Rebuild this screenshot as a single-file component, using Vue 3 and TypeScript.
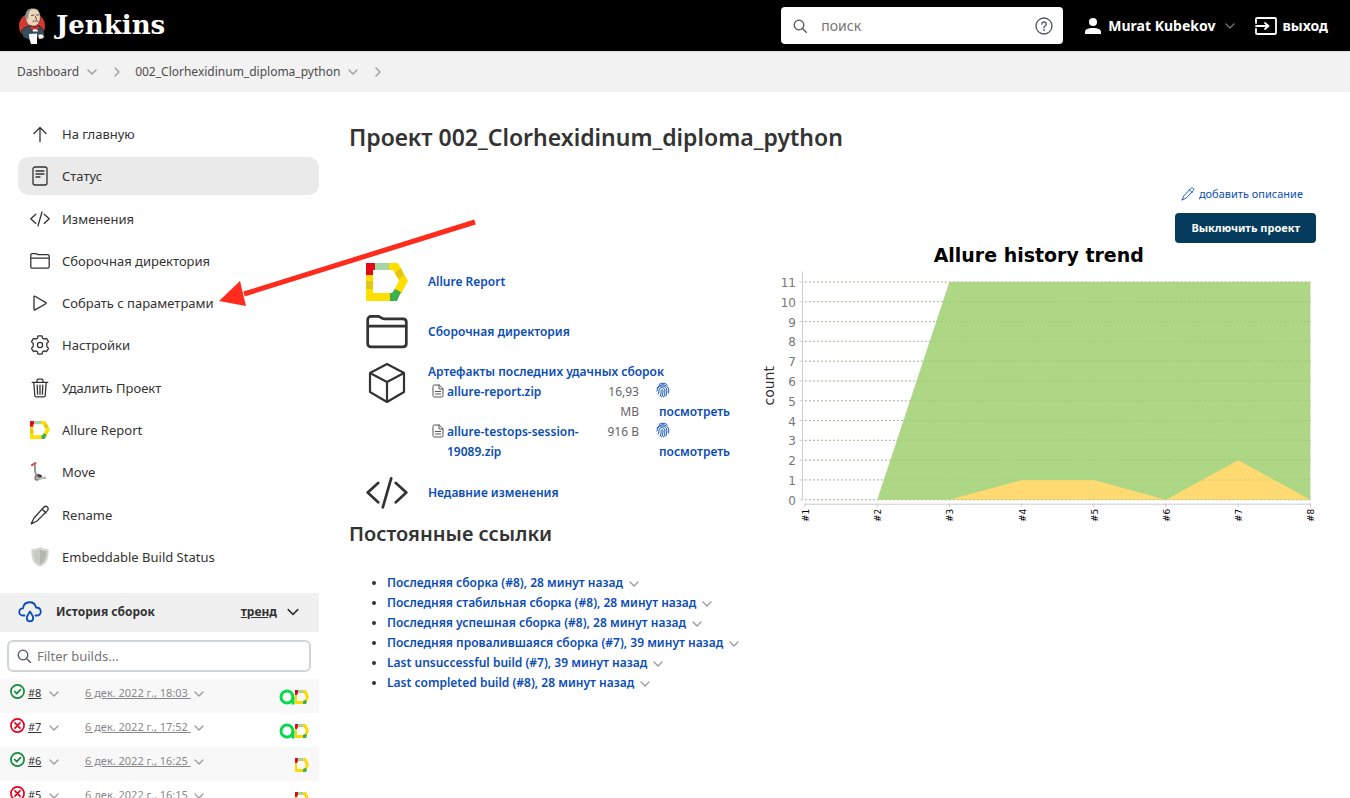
<script setup lang="ts">
interface Task { icon: string; label: string; active?: boolean }
interface Build { id: number; ok: boolean; date: string; testops: boolean }
interface Artifact { name: string; size: string }

const tasks: Task[] = [
  { icon: 'up', label: 'На главную' },
  { icon: 'doc', label: 'Статус', active: true },
  { icon: 'code', label: 'Изменения' },
  { icon: 'folder', label: 'Сборочная директория' },
  { icon: 'play', label: 'Собрать с параметрами' },
  { icon: 'gear', label: 'Настройки' },
  { icon: 'trash', label: 'Удалить Проект' },
  { icon: 'allure', label: 'Allure Report' },
  { icon: 'move', label: 'Move' },
  { icon: 'pencil', label: 'Rename' },
  { icon: 'shield', label: 'Embeddable Build Status' },
]

const builds: Build[] = [
  { id: 8, ok: true, date: '6 дек. 2022 г., 18:03', testops: true },
  { id: 7, ok: false, date: '6 дек. 2022 г., 17:52', testops: true },
  { id: 6, ok: true, date: '6 дек. 2022 г., 16:25', testops: false },
  { id: 5, ok: false, date: '6 дек. 2022 г., 16:15', testops: false },
]

const artifacts: Artifact[] = [
  { name: 'allure-report.zip', size: '16,93 MB' },
  { name: 'allure-testops-session-19089.zip', size: '916 B' },
]

const permalinks: string[] = [
  'Последняя сборка (#8), 28 минут назад',
  'Последняя стабильная сборка (#8), 28 минут назад',
  'Последняя успешная сборка (#8), 28 минут назад',
  'Последняя провалившаяся сборка (#7), 39 минут назад',
  'Last unsuccessful build (#7), 39 минут назад',
  'Last completed build (#8), 28 минут назад',
]

const passed = [0, 0, 11, 11, 11, 11, 11, 11]
const broken = [0, 0, 0, 1, 1, 0, 2, 0]
const plot = { left: 48, right: 554, top: 42, bottom: 260, max: 11 }
const xAt = (i: number): number => plot.left + ((plot.right - plot.left) * i) / (passed.length - 1)
const yAt = (v: number): number => plot.bottom - ((plot.bottom - plot.top) * v) / plot.max
const area = (values: number[]): string =>
  [`${xAt(0)},${yAt(0)}`, ...values.map((v, i) => `${xAt(i)},${yAt(v)}`), `${xAt(values.length - 1)},${yAt(0)}`].join(' ')
const ticks = Array.from({ length: plot.max + 1 }, (_, i) => i)
</script>

<template>
  <div class="page">
    <svg class="sprite" aria-hidden="true">
      <symbol id="i-up" viewBox="0 0 20 20"><path d="M10 17.5V3.5M4 9.5l6-6 6 6" /></symbol>
      <symbol id="i-doc" viewBox="0 0 20 20"><rect x="3" y="1" width="14" height="18" rx="2" /><path d="M6 5h8M6 8h8M6 11h4" /></symbol>
      <symbol id="i-code" viewBox="0 0 20 20"><path d="M5.8 5.2.8 9.8l5 4.6M14.2 5.2l5 4.6-5 4.6M12 3 8 16.8" /></symbol>
      <symbol id="i-folder" viewBox="0 0 20 20"><path d="M.8 15.5V4.2c0-1 .6-1.6 1.6-1.6h3.2c1.4 0 1.6 1.1 3 1.1h9c1 0 1.6.6 1.6 1.6v10.2c0 1-.6 1.6-1.6 1.6H2.400c-1 0-1.600-.6-1.600-1.600ZM.8 7.200h18.400" /></symbol>
      <symbol id="i-play" viewBox="0 0 20 20"><path d="M4 3.800v12.600c0 .6.5.8 1 .5l10.800-6.200c.5-.3.5-.8 0-1.100L5 3.300c-.5-.3-1-.1-1 .5Z" /></symbol>
      <symbol id="i-gear" viewBox="0 0 20 20"><path d="M8 .8h4l.5 2.300 1.800 1 2.200-.8 2 3.400-1.700 1.700v3.200l1.700 1.700-2 3.400-2.200-.8-1.800 1-.5 2.300H8l-.5-2.300-1.800-1-2.200.8-2-3.400 1.700-1.700V8.400L1.500 6.700l2-3.400 2.200.8 1.800-1Z" /><circle cx="10" cy="10" r="2.600" /></symbol>
      <symbol id="i-trash" viewBox="0 0 20 20"><path d="M3.800 4.500 4.800 17.500c.1.9.6 1.400 1.400 1.400h7.600c.8 0 1.300-.5 1.400-1.400l1-13M2.200 4.300h15.600M7 4V2.500c0-.9.500-1.400 1.400-1.400h3.200c.9 0 1.400.5 1.400 1.400V4M7.200 7.200l.4 9M10 7.200v9M12.800 7.200l-.4 9" /></symbol>
      <symbol id="i-pencil" viewBox="0 0 20 20"><path d="M13.800 2.200c1-1 2.400-1.200 3.500-.3 1.200 1 1.100 2.600.1 3.700L7 16l-5.800 2.800L4 13ZM12 4l4 4" /></symbol>
      <symbol id="i-allure" viewBox="0 0 42 38">
        <g stroke="none">
          <path fill="#ffdf00" d="M0 12h7v18h17v8H0ZM23 0h9l10 18-7 13-7-4 5-9-6-11h-4Z" />
          <path fill="#e3c517" d="M0 18h7v8H0ZM35 5l-6 5 4 6 5-4Z" />
          <path fill="#e60a17" d="M0 0h9v7H7v5H0Z" />
          <path fill="#a5d4a5" d="M9 0h14v7H9Z" />
          <path fill="#3daf4b" d="M24 30h2l3-4 6 3-4 9h-7Z" />
        </g>
      </symbol>
      <symbol id="i-allure-mini" viewBox="0 0 14 14">
        <g stroke="none">
          <path fill="#ffd800" d="M0 4h2v7h7v3H0ZM8 0h3l3 7-3 6-2-2 2-4-2-4H8Z" />
          <path fill="#e60a17" d="M0 0h3v3l-1 2H0Z" /><path fill="#a5d4a5" d="M3 0h5v3H3Z" />
          <path fill="#3daf4b" d="m8 11 2-1 2 1-1 3H8Z" />
        </g>
      </symbol>
      <symbol id="i-move" viewBox="0 0 20 20">
        <path stroke="#999" stroke-width="2" d="M5 3v6l2 7h8" /><path stroke="#333" stroke-width="2" d="m8 13 3 1-2 1" />
        <path stroke="#d94a50" stroke-width="2" d="M2 3.200 5.500 1" /><circle cx="7" cy="16" r="2" fill="#bbb" stroke="#777" /><path stroke="#bbb" stroke-width="2" d="m9 17 6-1.500" />
      </symbol>
      <symbol id="i-shield" viewBox="0 0 20 20">
        <path fill="#d4d5d0" stroke="#d4d5d0" d="M2 3c3 0 5.500-.8 8-2.200C12.500 2.200 15 3 18 3c0 8-1 13-8 16C3 16 2 11 2 3Z" />
        <path fill="#b3b6af" stroke="none" d="M10 2.500c2 1 4 1.500 6.500 1.600C16.400 11 15 15 10 17.500Z" />
        <path fill="#c6c8c2" stroke="none" d="M10 2.500c-2 1-4 1.500-6.500 1.600C3.600 11 5 15 10 17.500Z" />
      </symbol>
      <symbol id="i-box" viewBox="0 0 38 42"><path d="M19 2 36 11v19L19 40 2 30V11ZM2 11l17 9 17-9M19 20v20" /></symbol>
      <symbol id="i-file" viewBox="0 0 12 14"><path d="M1 2.200C1 1.300 1.500 1 2.200 1h5L11 4.700v7.200c0 .7-.4 1.100-1.200 1.100H2.200C1.500 13 1 12.600 1 11.900ZM7 1v4h4M3.300 7.500h5.400M3.300 10h5.400" /></symbol>
      <symbol id="i-finger" viewBox="0 0 14 16"><path d="M3 2.500C5 .8 9 .5 11.300 3M1 6C3.500 1.500 10.500 1.800 12.500 6.500c.5 1.500.4 3 .1 4.500M1 9c.5-7 9.500-6.500 9.800-.5 0 2-.2 4-.8 5.500M2.200 12C3 10.500 2.800 9.500 3 8.500c.7-4.500 6-3.500 5.900.5 0 2.500-.4 4.300-1.200 6M4.300 14C5.200 12 4.900 10 5.200 8.500c.5-1.500 1.900-1 1.800.5 0 2.200-.4 4-1.300 5.800" /></symbol>
      <symbol id="i-chev" viewBox="0 0 10 10"><path d="m1 3 4 4 4-4" /></symbol>
      <symbol id="i-right" viewBox="0 0 10 10"><path d="m3 1 4 4-4 4" /></symbol>
      <symbol id="i-search" viewBox="0 0 14 14"><circle cx="6" cy="6" r="4.800" /><path d="m9.500 9.500 4 4" /></symbol>
      <symbol id="i-help" viewBox="0 0 18 18"><circle cx="9" cy="9" r="8" /><path d="M6.800 7.200c0-3 4.600-2.800 4.500-.1 0 1.700-2.300 1.800-2.300 3.700M9 12.300v1.200" /></symbol>
      <symbol id="i-user" viewBox="0 0 16 16"><g fill="currentColor" stroke="none"><circle cx="8" cy="4" r="4" /><path d="M0 16v-2c0-3 3.500-4 8-4s8 1 8 4v2Z" /></g></symbol>
      <symbol id="i-exit" viewBox="0 0 22 18"><path d="M1 6V2c0-.6.400-1 1-1h18c.6 0 1 .4 1 1v14c0 .6-.4 1-1 1H2c-.6 0-1-.4-1-1v-4M1 9h12M10 6l3.500 3-3.500 3" /></symbol>
      <symbol id="i-cloud" viewBox="0 0 24 22"><path d="M6.500 14.500H5c-5 0-5-7 0-7.200C6-.5 16.500-.8 18 6.500c6 .2 6.500 8 .5 8h-1M12 10.500c-2 3-3.200 4.500-3.200 6.600 0 4.400 6.400 4.400 6.400 0 0-2.100-1.200-3.600-3.200-6.600Z" /></symbol>
      <symbol id="i-ok" viewBox="0 0 16 16"><circle cx="8" cy="8" r="7" /><path d="m5 8 2.200 2.300L11.200 6" /></symbol>
      <symbol id="i-fail" viewBox="0 0 16 16"><circle cx="8" cy="8" r="7" /><path d="m5.300 5.300 5.400 5.400M10.700 5.300l-5.400 5.400" /></symbol>
      <symbol id="i-testops" viewBox="0 0 16 16"><circle cx="8" cy="8" r="6" /><path stroke-linecap="butt" d="M14 8v7.500" /></symbol>
      <symbol id="i-butler" viewBox="0 0 28 38">
        <g stroke="none">
          <circle cx="14" cy="19" r="13" fill="#d33833" />
          <path fill="#335061" stroke="#111" stroke-width=".6" d="M4 23c2-2.500 5-3.500 8-4.500l5 2 4-2c3 2 5 5 5.500 9l-3 4-5-1-5 3-8-3Z" />
          <path fill="#f0d6b7" stroke="#333" stroke-width=".5" d="M8 7C9 1 18 0 20.500 4c2.500 3.500 2.200 9 0 12.500-2 3-7 3.500-10 1C8 15.500 7 11 8 7Z" />
          <path fill="#8d8f92" d="M7.500 8C8 3.500 11 1.500 14 1.500 11.500 3.500 10.500 6 10.500 9L9.500 13C7.500 12 7 10 7.500 8Z" />
          <path stroke="#333" stroke-width=".8" fill="none" d="M13.500 8.500 16 8M18.500 8h2M17.500 9.500l1 3M15 14.500c2-1 3.500-1 5 0" />
          <path fill="#fff" d="m13 19.500 4 2 3-2v5h-5Z" />
          <path fill="#d33833" stroke="#7a1715" stroke-width=".5" d="m13 18.500 4 2 4-2-.5 5-3.500-2-4 2Z" />
          <path fill="#fff" d="m11 27 8-.5v10.500h-6c-1-3-2-6-2-10Z" />
          <path fill="#f7f2e9" stroke="#333" stroke-width=".6" d="M20 28c2-2 5-1 6 1 .5 2-2 3.500-5 3Z" />
        </g>
      </symbol>
    </svg>

    <header class="topbar">
      <a class="brand" href="#"><svg class="butler"><use href="#i-butler" /></svg><span>Jenkins</span></a>
      <form class="search" role="search">
        <svg class="ic14"><use href="#i-search" /></svg>
        <input type="search" placeholder="поиск" aria-label="поиск" />
        <a href="#" aria-label="Помощь"><svg class="ic18"><use href="#i-help" /></svg></a>
      </form>
      <a class="user" href="#"><svg class="ic16"><use href="#i-user" /></svg><span>Murat Kubekov</span></a>
      <button class="chev" type="button" aria-label="Меню пользователя"><svg><use href="#i-chev" /></svg></button>
      <a class="exit" href="#"><svg><use href="#i-exit" /></svg><span>выход</span></a>
    </header>

    <nav class="crumbs">
      <a href="#">Dashboard</a>
      <button class="chev" type="button" aria-label="Меню Dashboard"><svg><use href="#i-chev" /></svg></button>
      <svg class="sep"><use href="#i-right" /></svg>
      <a href="#">002_Clorhexidinum_diploma_python</a>
      <button class="chev" type="button" aria-label="Меню проекта"><svg><use href="#i-chev" /></svg></button>
      <svg class="sep"><use href="#i-right" /></svg>
    </nav>

    <div class="body">
      <aside class="side">
        <nav class="tasks">
          <a v-for="t in tasks" :key="t.label" href="#" class="task" :class="{ active: t.active }">
            <svg><use :href="'#i-' + t.icon" /></svg><span>{{ t.label }}</span>
          </a>
        </nav>
        <section class="history">
          <div class="history-head">
            <svg class="cloud"><use href="#i-cloud" /></svg>
            <span class="history-title">История сборок</span>
            <a href="#">тренд</a>
            <button class="chev dark" type="button" aria-label="Свернуть"><svg><use href="#i-chev" /></svg></button>
          </div>
          <label class="filter">
            <svg class="ic14"><use href="#i-search" /></svg>
            <input type="text" placeholder="Filter builds..." aria-label="Filter builds..." />
          </label>
          <ul class="builds">
            <li v-for="b in builds" :key="b.id">
              <svg class="state" :class="b.ok ? 'ok' : 'fail'"><use :href="b.ok ? '#i-ok' : '#i-fail'" /></svg>
              <a href="#" class="num">#{{ b.id }}</a>
              <button class="chev" type="button" :aria-label="'Меню сборки ' + b.id"><svg><use href="#i-chev" /></svg></button>
              <a href="#" class="date">{{ b.date }}&nbsp;</a>
              <button class="chev more" type="button" :aria-label="'Ещё о сборке ' + b.id"><svg><use href="#i-chev" /></svg></button>
              <span class="badges">
                <svg v-if="b.testops" class="testops"><use href="#i-testops" /></svg>
                <svg class="mini"><use href="#i-allure-mini" /></svg>
              </span>
            </li>
          </ul>
        </section>
      </aside>

      <main class="main">
        <h1>Проект 002_Clorhexidinum_diploma_python</h1>
        <div class="actions">
          <a href="#" class="describe"><svg><use href="#i-pencil" /></svg>добавить описание</a>
          <button class="disable" type="button">Выключить проект</button>
        </div>
        <div class="columns">
          <div class="summary">
            <div class="row allure"><svg><use href="#i-allure" /></svg><a href="#">Allure Report</a></div>
            <div class="row folder"><svg><use href="#i-folder" /></svg><a href="#">Сборочная директория</a></div>
            <div class="row artifacts">
              <svg><use href="#i-box" /></svg>
              <div>
                <a href="#">Артефакты последних удачных сборок</a>
                <table>
                  <tbody>
                    <tr v-for="a in artifacts" :key="a.name">
                      <td class="file"><svg><use href="#i-file" /></svg></td>
                      <td class="name"><a href="#">{{ a.name }}</a></td>
                      <td class="size">{{ a.size }}</td>
                      <td class="view">
                        <a href="#" aria-label="Отпечаток"><svg><use href="#i-finger" /></svg></a>
                        <a href="#" class="look">посмотреть</a>
                      </td>
                    </tr>
                  </tbody>
                </table>
              </div>
            </div>
            <div class="row code"><svg><use href="#i-code" /></svg><a href="#">Недавние изменения</a></div>
            <h2>Постоянные ссылки</h2>
            <ul class="permalinks">
              <li v-for="p in permalinks" :key="p">
                <a href="#">{{ p }}</a>
                <button class="chev" type="button" :aria-label="'Меню: ' + p"><svg><use href="#i-chev" /></svg></button>
              </li>
            </ul>
          </div>

          <svg class="chart" viewBox="0 3 560 290" role="img" aria-label="Allure history trend">
            <text class="c-title" x="282" y="22">Allure history trend</text>
            <text class="c-axis" transform="translate(17 146) rotate(-90)">count</text>
            <line v-for="t in ticks" :key="'g' + t" class="grid" :x1="plot.left" :x2="plot.right" :y1="yAt(t)" :y2="yAt(t)" />
            <polygon class="passed" :points="area(passed)" />
            <polygon class="broken" :points="area(broken)" />
            <line v-for="t in ticks" :key="'o' + t" class="grid over" :x1="plot.left" :x2="plot.right" :y1="yAt(t)" :y2="yAt(t)" />
            <path class="axis" d="M45.500 32v228M48 264.500h506" />
            <g v-for="t in ticks" :key="'y' + t">
              <line class="axis" x1="43" x2="46" :y1="yAt(t)" :y2="yAt(t)" />
              <text class="c-y" x="39" :y="yAt(t) + 5">{{ t }}</text>
            </g>
            <g v-for="(_, i) in passed" :key="'x' + i">
              <line class="axis" :x1="xAt(i)" :x2="xAt(i)" y1="264" y2="267" />
              <text class="c-x" :transform="`translate(${xAt(i) + 4} 269) rotate(-90)`">#{{ i + 1 }}</text>
            </g>
          </svg>
        </div>
      </main>
    </div>

    <svg class="pointer" viewBox="0 0 260 90" aria-hidden="true">
      <path d="M257 5 26 77" /><path class="head" d="m1 84 21-20 6 25Z" />
    </svg>
  </div>
</template>

<style>
html, body { height: 100%; overflow: hidden; }
</style>

<style scoped>
* { box-sizing: border-box; }
.page {
  position: relative;
  height: 100vh;
  overflow: hidden;
  background: #fff;
  color: #333;
  font: 13px/20px "Noto Sans", "Open Sans", sans-serif;
}
svg { flex: none; fill: none; stroke: currentColor; stroke-width: 1.3; stroke-linecap: round; stroke-linejoin: round; }
.sprite { position: absolute; width: 0; height: 0; }
a { color: #0b4db7; text-decoration: none; }
button { border: 0; padding: 0; background: none; font: inherit; cursor: pointer; }
input { border: 0; outline: 0; background: none; font: inherit; color: #333; min-width: 0; }
input::placeholder { color: #757575; opacity: 1; }
ul { list-style: none; margin: 0; padding: 0; }
.chev { display: inline-flex; align-items: center; color: #9a9a9a; }
.chev svg { width: 10px; height: 10px; }
.chev.dark { color: #333; }
.ic14 { width: 14px; height: 14px; }
.ic16 { width: 16px; height: 16px; }
.ic18 { width: 18px; height: 18px; }

.topbar { display: flex; align-items: center; height: 51px; padding: 0 22px 0 18px; background: #000; }
.topbar a { display: flex; align-items: center; color: #fff; font-weight: 700; font-size: 14px; }
.topbar .brand { gap: 10px; margin-right: auto; font: 700 26px/32px "DejaVu Serif", serif; }
.brand span { padding-bottom: 2px; }
.butler { width: 28px; height: 38px; }
.search { display: flex; align-items: center; width: 282px; height: 37px; padding: 0 10px 0 12px; border-radius: 4px; background: #fff; color: #4d545d; }
.search input { flex: 1; padding: 0 0 0 14px; font-size: 14px; }
.topbar .search a { color: #4d545d; }
.topbar .user { gap: 7px; margin-left: 22px; }
.topbar > .chev { margin: 0 20px 0 10px; color: #777; }
.topbar .exit { gap: 5px; }
.exit svg { width: 22px; height: 18px; stroke-width: 1.8; }

.crumbs { display: flex; align-items: center; height: 41px; padding: 0 17px; background: #f2f2f2; border-top: 1px solid #ddd; font-size: 12px; }
.crumbs a { color: #4d4d4d; }
.crumbs .chev { margin: 0 15px 0 8px; }
.crumbs .sep { width: 10px; height: 10px; margin-right: 13px; color: #9a9a9a; }

.body { display: flex; }
.side { width: 319px; flex: none; padding-top: 21px; }
.tasks { display: grid; grid-auto-rows: 1fr; align-items: center; height: 465px; padding: 0 0 0 18px; }
.task { display: flex; align-items: center; gap: 12px; height: 38px; padding: 0 12px; border-radius: 10px; color: #333; }
.task.active { background: #eaeaea; }
.task svg { width: 20px; height: 20px; }

.history { margin-top: 15px; }
.history-head { display: flex; align-items: center; height: 39px; padding: 0 20px 2px 18px; background: #f0f0f0; font-weight: 700; font-size: 12px; }
.cloud { width: 24px; height: 22px; color: #0b4db7; stroke-width: 1.8; }
.history-title { margin: 0 auto 0 14px; }
.history-head a { color: #333; text-decoration: underline; }
.history-head .chev { margin-left: 10px; }
.history-head .chev svg { width: 12px; height: 12px; }
.filter { display: flex; align-items: center; gap: 6px; height: 32px; margin: 8px 8px 7px 7px; padding: 0 8px; border: 2px solid #ced4da; border-radius: 6px; color: #4d545d; }
.filter input { flex: 1; padding: 0; }
.builds li { display: flex; align-items: flex-start; height: 34px; padding: 5px 10px; font-size: 11px; line-height: 18px; }
.builds li:nth-child(odd) { background: #f8f8f8; }
.state { width: 15px; height: 15px; stroke-width: 1.8; }
.state.ok { color: #138a3d; }
.state.fail { color: #e6001f; }
.builds a { text-decoration: underline; }
.builds .num { width: 13px; margin-left: 3px; color: #333; }
.builds .chev { height: 20px; margin-left: 8px; }
.builds .date { margin-left: 26px; color: #888; }
.builds .more { margin-left: 3px; }
.badges { display: flex; align-items: center; height: 26px; margin-left: auto; }
.testops { width: 16px; height: 16px; color: #05d94c; stroke-width: 3; }
.mini { width: 14px; height: 14px; }

.main { flex: 1; min-width: 0; padding: 27px 34px 0 30px; }
h1 { margin: 0; font-size: 23px; line-height: 36px; font-weight: 600; }
h2 { margin: 0; font-size: 20px; line-height: 32px; font-weight: 600; }
.actions { display: flex; flex-direction: column; align-items: flex-end; gap: 9px; margin-top: 29px; }
.describe { display: flex; align-items: center; gap: 4px; margin-right: 13px; font-size: 11px; }
.describe svg { width: 14px; height: 14px; }
.disable { height: 30px; padding: 0 16px; border-radius: 4px; background: #053c5e; color: #fff; font-size: 11px; font-weight: 700; }
.columns { display: grid; grid-template-columns: minmax(0, 408fr) minmax(0, 560fr); align-items: start; }
.chart { width: 100%; }
.summary { padding-top: 19px; font-weight: 600; font-size: 12px; }
.row { display: flex; align-items: center; gap: 20px; padding-left: 17px; }
.row > svg { width: 42px; }
.allure { height: 40px; }
.allure > svg { height: 38px; }
.folder { height: 60px; }
.folder > svg { height: 42px; }
.row.artifacts { align-items: flex-start; height: 106px; }
.row.artifacts > svg { height: 42px; stroke-width: 2.200; }
.code { height: 50px; }
.code > svg { height: 42px; }
table { border-collapse: collapse; font-size: 12px; }
td { padding: 0; vertical-align: top; line-height: 20px; }
td svg { display: block; stroke-width: 1; }
.file { width: 19px; padding: 2px 0 0 4px; }
.file svg { width: 12px; height: 14px; color: #555; }
.name { width: 142px; }
.size { width: 50px; padding-left: 14px; text-align: right; font-weight: 400; color: #666; }
.view { padding-left: 17px; }
.view svg { width: 14px; height: 16px; margin-bottom: 4px; }
.look { display: block; margin-left: 3px; }
.permalinks { margin: 23px 0 0 38px; list-style: disc; }
.permalinks .chev { margin-left: 6px; vertical-align: middle; }

.grid { stroke: #c0c0c0; stroke-width: 1; stroke-dasharray: 2 2; stroke-linecap: butt; }
.grid.over { stroke: #86ad60; opacity: .35; }
.passed { fill: #aed785; stroke: none; }
.broken { fill: #ffd971; stroke: none; }
.axis { stroke: #ccc; stroke-width: 1; }
.chart text { stroke: none; font-family: "DejaVu Sans", sans-serif; }
.chart .c-title { fill: #000; font-size: 19px; font-weight: 700; text-anchor: middle; }
.chart .c-axis { fill: #333; font-size: 14px; text-anchor: middle; }
.chart .c-y { fill: #777; font-size: 12px; text-anchor: end; }
.chart .c-x { fill: #000; font-size: 9px; text-anchor: end; }

.pointer { position: absolute; left: 218px; top: 217px; width: 260px; height: 90px; color: #ff2b1c; stroke-width: 5; stroke-linecap: butt; pointer-events: none; }
.pointer .head { fill: currentColor; stroke: none; }
</style>
